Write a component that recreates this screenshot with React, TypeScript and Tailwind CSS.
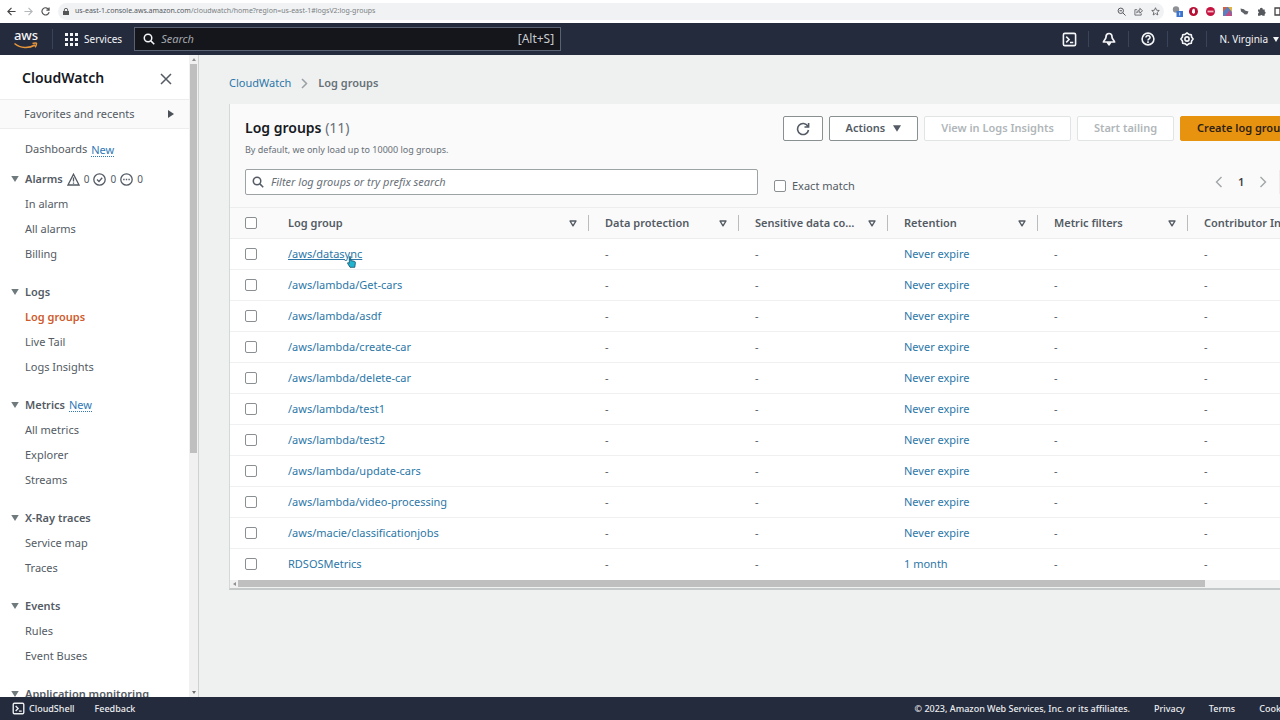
import React from "react";

type Item = { label: string; active?: boolean };
type Section = { title: string; isNew?: boolean; alarms?: boolean; items: Item[] };

const sections: Section[] = [
  { title: "Alarms", alarms: true, items: [{ label: "In alarm" }, { label: "All alarms" }, { label: "Billing" }] },
  { title: "Logs", items: [{ label: "Log groups", active: true }, { label: "Live Tail" }, { label: "Logs Insights" }] },
  { title: "Metrics", isNew: true, items: [{ label: "All metrics" }, { label: "Explorer" }, { label: "Streams" }] },
  { title: "X-Ray traces", items: [{ label: "Service map" }, { label: "Traces" }] },
  { title: "Events", items: [{ label: "Rules" }, { label: "Event Buses" }] },
  { title: "Application monitoring", items: [] },
];

const groups = [
  { name: "/aws/datasync", retention: "Never expire" },
  { name: "/aws/lambda/Get-cars", retention: "Never expire" },
  { name: "/aws/lambda/asdf", retention: "Never expire" },
  { name: "/aws/lambda/create-car", retention: "Never expire" },
  { name: "/aws/lambda/delete-car", retention: "Never expire" },
  { name: "/aws/lambda/test1", retention: "Never expire" },
  { name: "/aws/lambda/test2", retention: "Never expire" },
  { name: "/aws/lambda/update-cars", retention: "Never expire" },
  { name: "/aws/lambda/video-processing", retention: "Never expire" },
  { name: "/aws/macie/classificationjobs", retention: "Never expire" },
  { name: "RDSOSMetrics", retention: "1 month" },
];

const columns = ["Data protection", "Sensitive data co…", "Retention", "Metric filters", "Contributor Insights"];

const checkbox =
  "block size-3 shrink-0 appearance-none rounded-[2px] border border-[#8a8f92] bg-white checked:bg-[#0073bb]";

function SearchIcon({ className }: { className: string }) {
  return (
    <svg className={className} viewBox="0 0 16 16" fill="none" stroke="currentColor" strokeWidth="2">
      <circle cx="6.7" cy="6.7" r="5" />
      <path d="M10.5 10.5 15 15" />
    </svg>
  );
}

function Triangle({ className }: { className: string }) {
  return (
    <svg className={className} viewBox="0 0 10 8" fill="currentColor">
      <path d="M0 0h10L5 8z" />
    </svg>
  );
}

function ShellIcon({ className }: { className: string }) {
  return (
    <svg className={className} viewBox="0 0 16 16" fill="none" stroke="currentColor" strokeWidth="1.7">
      <rect x="1.5" y="1.5" width="13" height="13" rx="1.5" />
      <path d="m4.5 5 3 3-3 3M8.5 11.2h3.5" />
    </svg>
  );
}

function BrowserBar() {
  return (
    <div className="flex h-[23px] shrink-0 items-center bg-white text-[#55585c]">
      <div className="flex w-[58px] items-center gap-2 pl-[7px]">
        <button aria-label="Back">
          <svg className="size-[9px] text-[#444]" viewBox="0 0 10 10" fill="none" stroke="currentColor" strokeWidth="1.3">
            <path d="M9.5 5H1M5 1 1 5l4 4" />
          </svg>
        </button>
        <button aria-label="Forward">
          <svg className="size-[9px] text-[#b5b8bb]" viewBox="0 0 10 10" fill="none" stroke="currentColor" strokeWidth="1.3">
            <path d="M.5 5H9M5 1l4 4-4 4" />
          </svg>
        </button>
        <button aria-label="Reload">
          <svg className="size-[9px] text-[#555]" viewBox="0 0 10 10" fill="none" stroke="currentColor" strokeWidth="1.3">
            <path d="M8.6 3A4 4 0 1 0 9 5.6M9 .5v3H6" />
          </svg>
        </button>
      </div>
      <div className="flex h-[17px] w-[1106px] items-center rounded-full bg-[#f0f2f4] pr-1 pl-[5px]">
        <svg className="mr-[6px] h-[7px] w-[6px] text-[#555]" viewBox="0 0 6 7" fill="currentColor">
          <path d="M0 3h6v4H0z" />
          <path d="M1.3 3V2a1.7 1.7 0 0 1 3.4 0v1" fill="none" stroke="currentColor" strokeWidth=".9" />
        </svg>
        <span className="grow text-[7px]">
          us-east-1.console.aws.amazon.com<span className="text-[#7b7f83]">/cloudwatch/home?region=us-east-1#logsV2:log-groups</span>
        </span>
        <div className="flex items-center gap-2">
          <svg className="size-[9px]" viewBox="0 0 10 10" fill="none" stroke="currentColor" strokeWidth="1.1">
            <circle cx="4.2" cy="4.2" r="3" />
            <path d="m6.5 6.5 3 3M2.8 4.2h2.8" />
          </svg>
          <svg className="size-[9px]" viewBox="0 0 10 10" fill="none" stroke="currentColor" strokeWidth=".9">
            <path d="M3.5 3H1v6h7V7M3 6.5c.3-2.3 1.7-3 3.5-3V1.5l3 2.7-3 2.6V5.2C5 5.200 4 5.500 3 6.500z" />
          </svg>
          <svg className="size-[9px]" viewBox="0 0 10 10" fill="none" stroke="currentColor" strokeWidth=".9">
            <path d="m5 .8 1.200 2.800 3 .3L6.900 5.900l.7 3L5 7.300 2.400 8.900l.7-3L.8 3.900l3-.3z" />
          </svg>
        </div>
      </div>
      <div className="ml-2 flex items-center gap-2">
        <svg className="-mr-[2px] h-[11px] w-[11px]" viewBox="0 0 11 11">
          <circle cx="4" cy="3.500" r="3.200" fill="#8d9095" />
          <rect x="4.500" y="5" width="6.500" height="6" fill="#3c74d0" />
          <path d="M7.700 6.500v3" stroke="#dce8ff" />
        </svg>
        <svg className="size-[9px]" viewBox="0 0 9 9">
          <circle cx="4.500" cy="4.500" r="4.500" fill="#b80f34" />
          <path d="M3 3.500 4 1.800h1.400L6 3.500v2.300L4.800 7 3 5.800z" fill="#fff" />
        </svg>
        <svg className="size-[9px]" viewBox="0 0 9 9">
          <circle cx="4.500" cy="4.500" r="4.500" fill="#c5123f" />
          <path d="M1.500 3.600h6v1.800h-6z" fill="#f2b8c6" />
        </svg>
        <svg className="size-[9px]" viewBox="0 0 9 9">
          <path d="M0 0h9v9H0z" fill="#5a7fc0" />
          <path d="M0 0h4L0 5z" fill="#d9603f" />
          <path d="M9 0v5L5 0z" fill="#e3b23c" />
          <path d="M2 9 7 3l2 6z" fill="#c14d80" />
        </svg>
        <svg className="size-[9px]" viewBox="0 0 9 9" fill="#5f6266">
          <path d="M.5 1.500 4 2.200l1 1.300 3.500.9L7.300 7.300 4.800 7.500 3.200 6 1 4.500z" />
        </svg>
        <svg className="size-[9px]" viewBox="0 0 9 9" fill="#55585c">
          <path d="M1 2.500h2a1.400 1.400 0 1 1 2.700 0h2v2a1.300 1.300 0 0 1 0 2.500v1.800H5.500a1.200 1.200 0 0 0-2.300 0H1V6.500a1.200 1.200 0 0 0 0-2.300z" />
        </svg>
        <svg className="size-[9px]" viewBox="0 0 9 9" fill="none" stroke="#444" strokeWidth="1.300">
          <path d="M1 1h7v7H1zM6 1v7" />
        </svg>
      </div>
    </div>
  );
}

function Header() {
  const cell = "flex h-4 items-center justify-center border-r border-[#39435a]";
  return (
    <header className="flex h-8 shrink-0 items-center bg-[#242b3d] text-[#f4f5f6]">
      <a href="#home" aria-label="AWS home" className="flex h-5 w-[53px] flex-col items-center justify-center border-r border-[#39435a]">
        <span className="h-3 text-[13px] leading-[10px] font-medium">aws</span>
        <svg className="h-[7px] w-6 shrink-0 text-[#e8963a]" viewBox="0 0 24 7" fill="none" stroke="currentColor" strokeWidth="1.500">
          <path d="M.5 1.500C6.500 6.600 15 6.600 21 3M18.500 1.500c2.200-.6 4.300-.6 4 .2-.1 1.300-.7 2.600-1.500 3.600" />
        </svg>
      </a>
      <button className="flex items-center gap-[6px] pl-3 text-[10px]">
        <svg className="size-[13px]" viewBox="0 0 13 13" fill="currentColor">
          {[0, 5, 10].map((y) => [0, 5, 10].map((x) => <rect key={x + "-" + y} x={x} y={y} width="3" height="3" />))}
        </svg>
        Services
      </button>
      <label className="ml-3 flex h-6 w-[427px] items-center gap-[6px] border border-[#596273] bg-[#14161c] pr-[6px] pl-2">
        <SearchIcon className="size-3 shrink-0" />
        <input aria-label="Search" placeholder="Search" className="w-0 grow bg-transparent text-[11px] outline-none placeholder:text-[#a5a8ad] placeholder:italic" />
        <span className="text-[12px] text-[#c9cbce]">[Alt+S]</span>
      </label>
      <div className="grow" />
      <div className="flex items-center pr-[95px]">
        <button aria-label="CloudShell" className={cell + " w-[39px]"}>
          <ShellIcon className="size-[15px]" />
        </button>
        <button aria-label="Notifications" className={cell + " w-10"}>
          <svg className="size-[14px]" viewBox="0 0 14 14" fill="none" stroke="currentColor" strokeWidth="1.700" strokeLinejoin="round">
            <path d="M7 1.500C4.800 1.500 4 3.200 4 5c0 2-2 3.300-2.600 5h11.200C12 8.300 10 7 10 5c0-1.800-.8-3.500-3-3.500zM5.300 10.200 7 12.800l1.700-2.600" />
          </svg>
        </button>
        <button aria-label="Help" className={cell + " w-[39px]"}>
          <svg className="size-[14px]" viewBox="0 0 14 14" fill="none" stroke="currentColor" strokeWidth="1.600">
            <circle cx="7" cy="7" r="5.900" />
            <path d="M4.900 5.600c0-2.800 4.300-2.600 4.200-.1C9.100 7 7 6.900 7 8.500M7 9.300v1.600" />
          </svg>
        </button>
        <button aria-label="Settings" className={cell + " w-[39px]"}>
          <svg className="size-[14px]" viewBox="0 0 14 14" fill="none" stroke="currentColor" strokeWidth="1.600" strokeLinejoin="round">
            <path d="m7 .9 1.900 1.500 2.400.3.300 2.400L13.100 7l-1.500 1.900-.3 2.400-2.400.3L7 13.100l-1.900-1.500-2.400-.3-.3-2.400L.9 7l1.500-1.900.3-2.400 2.400-.3z" />
            <circle cx="7" cy="7" r="2.100" />
          </svg>
        </button>
        <button className="flex items-center gap-[5px] pl-3 text-[10px]">
          N. Virginia
          <Triangle className="h-[5px] w-[6px]" />
        </button>
      </div>
    </header>
  );
}

function AlarmCounts() {
  return (
    <span className="flex items-center gap-1 text-[10px] font-normal">
      <span className="flex items-center gap-1">
        <svg className="size-[13px]" viewBox="0 0 13 13" fill="none" stroke="currentColor" strokeWidth="1.300">
          <path d="M6.500 1.200 12 12H1zM6.500 4.500v4M6.500 9.500v1.200" />
        </svg>
        0
      </span>
      <span className="flex items-center gap-1">
        <svg className="size-[13px]" viewBox="0 0 13 13" fill="none" stroke="currentColor" strokeWidth="1.300">
          <circle cx="6.500" cy="6.500" r="5.700" />
          <path d="m4 6.500 2 2 3.200-3.700" />
        </svg>
        0
      </span>
      <span className="flex items-center gap-1">
        <svg className="size-[13px]" viewBox="0 0 13 13" fill="none" stroke="currentColor" strokeWidth="1.300">
          <circle cx="6.500" cy="6.500" r="5.700" />
          <path d="M3.200 6.500h1.400M5.800 6.500h1.400M8.400 6.500h1.400" />
        </svg>
        0
      </span>
    </span>
  );
}

function NewTag() {
  return (
    <a href="#new" className="border-b border-dotted border-[#2f78b7] text-[11px] leading-[13px] font-normal text-[#2f78b7]">
      New
    </a>
  );
}

function Sidebar() {
  return (
    <aside className="flex w-[199px] shrink-0 border-r border-[#cfd2d3] bg-white">
      <nav aria-label="CloudWatch" className="w-[189px] overflow-hidden text-[11px] text-[#545b64]">
        <div className="flex h-[45px] items-center justify-between border-b border-[#eceeee] pr-[17px] pl-[22px]">
          <h2 className="text-[14px] font-semibold text-[#16191f]">CloudWatch</h2>
          <button aria-label="Close">
            <svg className="mt-1 size-[12px] text-[#545b64]" viewBox="0 0 12 12" fill="none" stroke="currentColor" strokeWidth="1.500">
              <path d="m1 1 10 10M11 1 1 11" />
            </svg>
          </button>
        </div>
        <button className="flex h-[29px] w-full items-center justify-between border-b border-[#eceeee] bg-[#fafafa] pr-[15px] pl-6">
          Favorites and recents
          <svg className="h-2 w-[6px] text-[#4b5158]" viewBox="0 0 6 8" fill="currentColor">
            <path d="M0 0v8l6-4z" />
          </svg>
        </button>
        <div className="mt-2 flex h-[25px] items-center gap-1 pl-[25px]">
          <a href="#dashboards">Dashboards</a>
          <NewTag />
        </div>
        <div className="mt-1 flex flex-col gap-3">
          {sections.map((s) => (
            <section key={s.title}>
              <div className="flex h-[26px] items-center pl-[11px] font-semibold">
                <Triangle className="mr-[6px] h-[6px] w-2 shrink-0 text-[#6f7a7c]" />
                <h3 className="mr-1 whitespace-nowrap">{s.title}</h3>
                {s.isNew && <NewTag />}
                {s.alarms && <AlarmCounts />}
              </div>
              <ul>
                {s.items.map((i) => (
                  <li key={i.label} className="flex h-[25px] items-center pl-[25px]">
                    <a href="#nav" className={i.active ? "font-semibold text-[#cf5a2c]" : ""}>
                      {i.label}
                    </a>
                  </li>
                ))}
              </ul>
            </section>
          ))}
        </div>
      </nav>
      <div className="flex w-[9px] flex-col items-center bg-[#f1f1f1] py-[3px]">
        <svg className="h-[3px] w-[4px] shrink-0 text-[#909090]" viewBox="0 0 4 3" fill="currentColor">
          <path d="M0 3h4L2 0z" />
        </svg>
        <div className="mt-[3px] h-[389px] w-[7px] shrink-0 bg-[#bfbfbf]" />
        <div className="grow" />
        <svg className="h-[3px] w-[4px] shrink-0 text-[#707070]" viewBox="0 0 4 3" fill="currentColor">
          <path d="M0 0h4L2 3z" />
        </svg>
      </div>
    </aside>
  );
}

function HandCursor() {
  return (
    <svg className="pointer-events-none absolute top-[10px] left-[59px] h-3 w-[9px]" viewBox="0 0 9 12" fill="#22b3cf" stroke="#14506a" strokeWidth=".8">
      <path d="M2.300 1.200c0-1 1.400-1 1.400 0v3.300l3.600.8c.8.200 1.200.7 1.100 1.500L7.800 11.300H3L.6 7.400c-.3-.9.600-1.200 1.700 0z" />
    </svg>
  );
}

function SortMark() {
  return (
    <svg className="h-[7px] w-2 shrink-0" viewBox="0 0 8 7" fill="none" stroke="#545b64" strokeWidth="1.400" strokeLinejoin="round">
      <path d="M1 1h6L4 5.800z" />
    </svg>
  );
}

function HeadCell({ label, last }: { label: string; last?: boolean }) {
  return (
    <th scope="col" className="p-0 text-left font-semibold">
      <div className={"flex h-4 items-center justify-between overflow-hidden pr-[11px] pl-4 whitespace-nowrap " + (last ? "" : "border-r border-[#b9bdbf]")}>
        <span>{label}</span>
        {!last && <SortMark />}
      </div>
    </th>
  );
}

function LogGroupTable() {
  return (
    <table className="w-full table-fixed border-collapse text-[11px] text-[#545b64]">
      <colgroup>
        <col className="w-[42px]" />
        <col className="w-[317px]" />
        <col className="w-[150px]" />
        <col className="w-[149px]" />
        <col className="w-[150px]" />
        <col className="w-[150px]" />
        <col />
      </colgroup>
      <thead>
        <tr className="h-[31px] border-y border-[#eceeee] bg-[#fafafa]">
          <th scope="col" className="p-0 pl-[15px]">
            <input type="checkbox" aria-label="Select all log groups" className={checkbox} />
          </th>
          <HeadCell label="Log group" />
          {columns.map((c, i) => (
            <HeadCell key={c} label={c} last={i === columns.length - 1} />
          ))}
        </tr>
      </thead>
      <tbody>
        {groups.map((g, i) => (
          <tr key={g.name} className="h-[31px] border-b border-[#eff0f1] last:border-b-0">
            <td className="p-0 pl-[15px]">
              <input type="checkbox" aria-label={"Select " + g.name} className={checkbox} />
            </td>
            <td className="p-0 pl-4 text-[#2c77a8]">
              <a href="#group" className={i === 0 ? "relative underline" : "relative"}>
                {g.name}
                {i === 0 && <HandCursor />}
              </a>
            </td>
            <td className="p-0 pl-4">-</td>
            <td className="p-0 pl-4">-</td>
            <td className="p-0 pl-4 text-[#2c77a8]">
              <a href="#retention">{g.retention}</a>
            </td>
            <td className="p-0 pl-4">-</td>
            <td className="p-0 pl-4">-</td>
          </tr>
        ))}
      </tbody>
    </table>
  );
}

function LogGroupsPanel() {
  const btn = "flex h-[25px] items-center rounded-[2px] border px-4 text-[11px] font-semibold whitespace-nowrap";
  return (
    <section className="border-b-2 border-l border-b-[#c6c9ca] border-l-[#d5d8d9] bg-white">
      <div className="bg-[#fafafa] px-[15px] pt-3">
        <div className="flex items-start justify-between">
          <div>
            <h1 className="text-[14px] leading-6 font-semibold text-[#16191f]">
              Log groups <span className="font-normal text-[#687078]">(11)</span>
            </h1>
            <p className="text-[9px] leading-5 text-[#687078]">By default, we only load up to 10000 log groups.</p>
          </div>
          <div className="flex gap-[6px]">
            <button aria-label="Refresh" className="flex h-[25px] w-10 items-center justify-center rounded-[2px] border border-[#8a8f92] bg-white text-[#545b64]">
              <svg className="size-[14px]" viewBox="0 0 14 14" fill="none" stroke="currentColor" strokeWidth="1.600">
                <path d="M11.800 4.200A5.500 5.500 0 1 0 12.500 8M12.600 1v4H8.500" />
              </svg>
            </button>
            <button className={btn + " gap-2 border-[#8a8f92] bg-white text-[#545b64]"}>
              Actions <Triangle className="h-[7px] w-2" />
            </button>
            <button className={btn + " border-[#e1e4e5] bg-white text-[#b0b6b9]"}>View in Logs Insights</button>
            <button className={btn + " border-[#e1e4e5] bg-white text-[#b0b6b9]"}>Start tailing</button>
            <button className={btn + " border-[#e8930f] bg-[#e8930f] text-[#2c2114]"}>Create log group</button>
          </div>
        </div>
        <div className="flex h-[47px] items-start justify-between pt-[9px]">
          <div className="flex">
            <label className="flex h-[26px] w-[513px] items-center gap-[7px] rounded-[2px] border border-[#9da2a5] bg-white px-[6px]">
              <SearchIcon className="size-3 shrink-0 text-[#545b64]" />
              <input aria-label="Filter log groups" placeholder="Filter log groups or try prefix search" className="w-0 grow text-[11px] outline-none placeholder:text-[#687078] placeholder:italic" />
            </label>
            <label className="ml-4 flex items-center gap-[6px] pt-2 text-[11px] text-[#545b64]">
              <input type="checkbox" className={checkbox} />
              Exact match
            </label>
          </div>
          <div className="flex h-[26px] items-center text-[11px]">
            <button aria-label="Previous page">
              <svg className="h-3 w-2 text-[#a0a5a8]" viewBox="0 0 8 12" fill="none" stroke="currentColor" strokeWidth="1.400">
                <path d="M6.500 1 1.500 6l5 5" />
              </svg>
            </button>
            <span className="w-9 text-center font-semibold text-[#3a4046]">1</span>
            <button aria-label="Next page">
              <svg className="h-3 w-2 text-[#a0a5a8]" viewBox="0 0 8 12" fill="none" stroke="currentColor" strokeWidth="1.400">
                <path d="m1.500 1 5 5-5 5" />
              </svg>
            </button>
            <span className="ml-3 h-6 border-l border-[#eceeee]" />
            <button aria-label="Preferences" className="ml-[10px]">
              <svg className="size-[14px] text-[#545b64]" viewBox="0 0 14 14" fill="none" stroke="currentColor" strokeWidth="1.500">
                <circle cx="7" cy="7" r="5" />
                <circle cx="7" cy="7" r="2" />
              </svg>
            </button>
          </div>
        </div>
      </div>
      <LogGroupTable />
      <div className="flex h-2 items-center bg-[#f1f1f1] pl-[3px]">
        <svg className="h-1 w-[3px] text-[#909090]" viewBox="0 0 3 4" fill="currentColor">
          <path d="M3 0v4L0 2z" />
        </svg>
        <div className="ml-[2px] h-[7px] w-[89%] bg-[#bfbfbf]" />
      </div>
    </section>
  );
}

export default function App() {
  return (
    <div className="h-screen overflow-hidden font-['Noto_Sans',sans-serif]">
      <div className="flex h-full min-w-[1374px] flex-col">
        <BrowserBar />
        <Header />
        <div className="flex min-h-0 grow">
          <Sidebar />
          <main className="min-w-0 grow bg-[#eff1f1] pr-[55px] pl-[30px]">
            <nav aria-label="Breadcrumb" className="flex h-[49px] items-center gap-[10px] pt-2 text-[11px]">
              <a href="#cloudwatch" className="text-[#2c77a8]">CloudWatch</a>
              <svg className="h-[11px] w-[7px] text-[#9aa0a3]" viewBox="0 0 7 11" fill="none" stroke="currentColor" strokeWidth="1.500">
                <path d="m1 1 4.500 4.500L1 10" />
              </svg>
              <span className="font-semibold text-[#687078]">Log groups</span>
            </nav>
            <LogGroupsPanel />
          </main>
        </div>
        <footer className="flex h-[23px] shrink-0 items-center justify-between bg-[#242b3d] pr-8 pl-3 text-[9px] font-medium text-[#eceef0]">
          <div className="flex items-center gap-5">
            <button className="flex items-center gap-1">
              <ShellIcon className="size-[13px]" />
              CloudShell
            </button>
            <a href="#feedback">Feedback</a>
          </div>
          <div className="flex items-center gap-6">
            <span>© 2023, Amazon Web Services, Inc. or its affiliates.</span>
            <a href="#privacy">Privacy</a>
            <a href="#terms">Terms</a>
            <a href="#cookies">Cookie preferences</a>
          </div>
        </footer>
      </div>
    </div>
  );
}
